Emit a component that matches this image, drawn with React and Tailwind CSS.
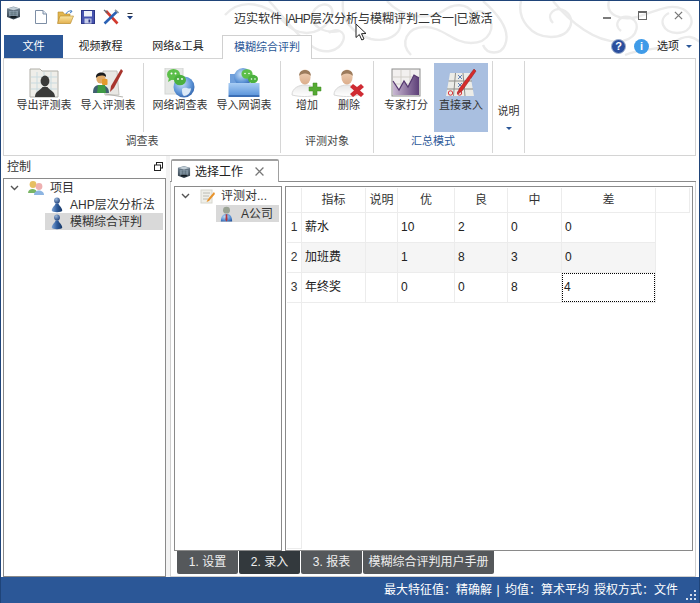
import React from 'react';

const CJK = "font-['Liberation_Sans','Noto_Sans_CJK_SC',sans-serif]";

function Gradients() {
    return (
        <svg className="absolute w-0 h-0">
            <defs>
                <linearGradient id="pinBody" x1="0" y1="0" x2="1" y2="0">
                    <stop offset="0" stopColor="#7ea3d4" />
                    <stop offset="0.5" stopColor="#2f5c9c" />
                    <stop offset="1" stopColor="#173765" />
                </linearGradient>
                <radialGradient id="pinHead" cx="0.35" cy="0.3" r="0.8">
                    <stop offset="0" stopColor="#9cb9dd" />
                    <stop offset="1" stopColor="#1f3f78" />
                </radialGradient>
                <linearGradient id="skin" x1="0" y1="0" x2="0" y2="1">
                    <stop offset="0" stopColor="#f0d2b8" />
                    <stop offset="1" stopColor="#dcae8c" />
                </linearGradient>
                <linearGradient id="shirt" x1="0" y1="0" x2="0" y2="1">
                    <stop offset="0" stopColor="#e8e8e8" />
                    <stop offset="1" stopColor="#ffffff" />
                </linearGradient>
                <linearGradient id="folderBlue" x1="0" y1="0" x2="0" y2="1">
                    <stop offset="0" stopColor="#a9cdf4" />
                    <stop offset="1" stopColor="#5f97dc" />
                </linearGradient>
                <radialGradient id="globe" cx="0.4" cy="0.35" r="0.75">
                    <stop offset="0" stopColor="#c6def6" />
                    <stop offset="0.6" stopColor="#5c93d6" />
                    <stop offset="1" stopColor="#2b5ba3" />
                </radialGradient>
                <linearGradient id="purple" x1="0" y1="0" x2="1" y2="0">
                    <stop offset="0" stopColor="#c9b8d2" />
                    <stop offset="1" stopColor="#5d3f78" />
                </linearGradient>
                <linearGradient id="folderYellow" x1="0" y1="0" x2="0" y2="1">
                    <stop offset="0" stopColor="#fbe7a3" />
                    <stop offset="1" stopColor="#e3b04e" />
                </linearGradient>
                <linearGradient id="cube" x1="0" y1="0" x2="0" y2="1">
                    <stop offset="0" stopColor="#7d8f9e" />
                    <stop offset="1" stopColor="#2d3a45" />
                </linearGradient>
            </defs>
        </svg>
    );
}

function Person({ className = '' }) {
    return (
        <svg viewBox="0 0 12 17" className={className}>
            <circle cx="6" cy="3.6" r="3.1" fill="url(#pinHead)" />
            <path d="M4.6 6.6 H7.4 C7.8 9 11.6 11 11.6 14.4 C11.6 16.8 0.4 16.8 0.4 14.4 C0.4 11 4.2 9 4.6 6.6 Z" fill="url(#pinBody)" />
        </svg>
    );
}

function CompanyPerson({ className = '' }) {
    return (
        <svg viewBox="0 0 13 17" className={className}>
            <circle cx="6.5" cy="4.4" r="3.7" fill="#9aa394" />
            <path d="M0.5 16.5 C0.5 10.5 3.5 8.6 6.5 8.6 C9.5 8.6 12.5 10.5 12.5 16.5 Z" fill="url(#globe)" />
            <path d="M5.7 8.8 H7.3 L7.6 15 L6.5 16.4 L5.4 15 Z" fill="#b5343a" />
        </svg>
    );
}

function AppIcon({ className = '' }) {
    return (
        <svg viewBox="0 0 15 14" className={className}>
            <path d="M1 2.5 L7.5 0.5 L14 2.5 V11 L7.5 13.5 L1 11 Z" fill="url(#cube)" />
            <path d="M1.5 2.6 L7.5 1 L13.5 2.6 L7.5 4.2 Z" fill="#c2ced6" />
            <rect x="3" y="5.2" width="9" height="4.6" fill="#92a5b3" />
            <path d="M3.5 6.8 H11.5 M3.5 8.3 H11.5 M6 5.4 V9.6 M9 5.4 V9.6" stroke="#53646f" strokeWidth="0.6" />
            <rect x="4.5" y="10" width="6" height="1.8" fill="#10181e" />
        </svg>
    );
}

function Chevron() {
    return (
        <svg viewBox="0 0 9 6" className="w-[9px] h-[6px] shrink-0">
            <path d="M1 1 L4.5 4.5 L8 1" stroke="#555" strokeWidth="1.4" fill="none" />
        </svg>
    );
}

function Watermark() {
    return (
        <svg viewBox="0 0 480 58" className="absolute left-[220px] top-0 w-[480px] h-[58px]" fill="none" stroke="#ebebeb" strokeWidth="2.4">
            <path d="M4 14 C20 -4 46 2 62 20 C76 36 96 36 108 20 C118 6 104 -2 94 8 C84 20 100 34 118 30" />
            <path d="M48 0 C62 14 70 30 92 46 C104 54 118 50 122 40 C126 30 114 26 108 32" />
            <path d="M122 0 C120 18 130 32 150 38 C170 42 184 30 178 18 C174 8 160 10 160 20" />
            <path d="M166 0 C180 16 206 20 222 10 C232 2 246 2 252 12" />
            <path d="M190 54 C178 42 186 26 204 26 C222 26 232 42 250 42 C268 42 276 26 266 14 C258 6 246 12 250 22" />
            <path d="M262 0 C278 14 290 30 284 44 C280 54 266 54 262 44" />
            <path d="M300 0 C296 18 310 36 330 36 C350 36 356 18 344 10 C334 4 324 14 332 22" />
            <path d="M332 0 C348 20 376 44 402 40 C418 36 420 20 408 16 C398 14 392 24 400 30" />
            <path d="M388 0 C384 14 400 20 416 16 C436 10 448 2 462 8 C476 16 472 32 456 32 C442 32 436 18 448 12" />
            <path d="M404 54 C424 46 440 50 452 42 C466 32 474 36 480 42" />
        </svg>
    );
}

function RibbonButton({ label, icon, active, width = 'w-[64px]' }) {
    return (
        <div className={`${width} h-[69px] flex flex-col items-center pt-[5px] shrink-0 ${active ? 'bg-[#a9bfe0]' : ''}`}>
            <div className="h-[29px] flex items-center justify-center">{icon}</div>
            <span className="text-[11px] leading-[16px] text-[#333] whitespace-nowrap">{label}</span>
        </div>
    );
}

function RibbonGroup({ title, titleColor = 'text-[#444]', width, pad, children }) {
    return (
        <div className={`${width} h-[92px] pt-[2px] shrink-0 border-r border-[#d6d6d6]`}>
            <div className={`flex h-[69px] ${pad}`}>{children}</div>
            <div className={`text-center text-[11px] leading-[18px] ${titleColor}`}>{title}</div>
        </div>
    );
}

const icons = {
    exportSheet: (
        <svg viewBox="0 0 30 30" className="w-[30px] h-[30px]">
            <path d="M1 1 H11 L13 3 H29 V29 H1 Z" fill="#efeee9" stroke="#b0afa8" />
            <path d="M2 9 H28 M2 15 H28 M2 21 H28 M8 4 V28 M15 4 V28 M22 4 V28" stroke="#c9dbe0" fill="none" />
            <ellipse cx="16" cy="13" rx="4.4" ry="5.4" fill="#3b3b39" />
            <path d="M6 29 C6 23 12 22 13.5 19 H18.5 C20 22 26 23 26 29 Z" fill="#3b3b39" />
        </svg>
    ),
    importSheet: (
        <svg viewBox="0 0 32 30" className="w-[32px] h-[30px]">
            <path d="M11 3 H25 L27 27 L13 27 Z" fill="#e9e8e4" stroke="#c4c4bf" />
            <path d="M14 26 L31 29" stroke="#b5b5b0" strokeWidth="1.2" />
            <path d="M29 1 L31 3 L22 20 L18 24 L19 18 Z" fill="#a8352d" />
            <circle cx="9" cy="11" r="4.6" fill="#e0aa68" />
            <path d="M4 10 C3 3 15 3 14 9 C11 7 7 7 4 10 Z" fill="#1c1c1c" />
            <path d="M1 25 C1 18 4 17 8 17 C12 17 17 18 17 25 Z" fill="#3f5f70" />
            <path d="M6 17 H13 L14 25 H5 Z" fill="#3f9a45" />
            <rect x="10" y="11" width="5.5" height="6" rx="1" fill="#e39a2c" />
        </svg>
    ),
    netSurvey: (
        <svg viewBox="0 0 32 30" className="w-[32px] h-[30px]">
            <rect x="1" y="0" width="18" height="26" fill="#e6e8e6" stroke="#d4d6d4" />
            <circle cx="20" cy="19" r="10.5" fill="url(#globe)" />
            <path d="M18 21 C22 18 25 22 27 20 C27 25 23 28 20 28 C18 27 18 24 18 21 Z" fill="#dbe9f7" />
            <ellipse cx="9.5" cy="6.5" rx="6.5" ry="5.6" fill="#5cbf49" />
            <path d="M5 10 L4 14 L9 11 Z" fill="#5cbf49" />
            <ellipse cx="16" cy="12" rx="6" ry="5.2" fill="#4bb03e" />
            <circle cx="7.5" cy="5.5" r="1" fill="#fff" />
            <circle cx="11.5" cy="5.5" r="1" fill="#fff" />
            <circle cx="14" cy="11" r="0.9" fill="#fff" />
            <circle cx="18" cy="11" r="0.9" fill="#fff" />
        </svg>
    ),
    importNet: (
        <svg viewBox="0 0 32 30" className="w-[32px] h-[30px]">
            <path d="M2 6 H9 V16 H2 Z" fill="#6f9fdb" />
            <circle cx="15" cy="9" r="9" fill="url(#globe)" />
            <ellipse cx="19" cy="6" rx="5.6" ry="4.8" fill="#5cbf49" />
            <ellipse cx="25" cy="11" rx="5" ry="4.2" fill="#4bb03e" />
            <circle cx="17" cy="5.5" r="0.8" fill="#fff" />
            <circle cx="21" cy="5.5" r="0.8" fill="#fff" />
            <circle cx="23.5" cy="11" r="0.8" fill="#fff" />
            <circle cx="27" cy="11" r="0.8" fill="#fff" />
            <path d="M0.5 15 H31.5 V27 H0.5 Z" fill="url(#folderBlue)" />
            <path d="M0.5 27 H31.5 V29 H0.5 Z" fill="#3c6fb6" />
        </svg>
    ),
    addPerson: (
        <svg viewBox="0 0 32 30" className="w-[32px] h-[30px]">
            <path d="M1 27 C1 20 8 17 14 17 C20 17 26 20 26 27 C18 29 9 29 1 27 Z" fill="url(#shirt)" stroke="#d8d8d8" />
            <ellipse cx="14" cy="9" rx="5.6" ry="7.4" fill="url(#skin)" />
            <path d="M8.2 8 C7.4 0 20.6 0 19.8 8 C18 4.5 10 4.5 8.2 8 Z" fill="#9c7b5c" />
            <path d="M22 15 H26 V19 H30 V23 H26 V27 H22 V23 H18 V19 H22 Z" fill="#55aa34" stroke="#3c8a20" strokeWidth="0.5" />
        </svg>
    ),
    delPerson: (
        <svg viewBox="0 0 32 30" className="w-[32px] h-[30px]">
            <path d="M1 27 C1 20 8 17 14 17 C20 17 26 20 26 27 C18 29 9 29 1 27 Z" fill="url(#shirt)" stroke="#d8d8d8" />
            <ellipse cx="14" cy="9" rx="5.6" ry="7.4" fill="url(#skin)" />
            <path d="M8.2 8 C7.4 0 20.6 0 19.8 8 C18 4.5 10 4.5 8.2 8 Z" fill="#9c7b5c" />
            <path d="M20 16 L24 19 L28 16 L31 19 L27 22.5 L31 26 L28 29 L24 26 L20 29 L17 26 L21 22.5 L17 19 Z" fill="#cf2b33" />
        </svg>
    ),
    expert: (
        <svg viewBox="0 0 30 30" className="w-[30px] h-[30px]">
            <rect x="1" y="1" width="28" height="27" fill="#f2f0ef" stroke="#8d8d8d" />
            <path d="M2 9 H28 M2 16 H28 M2 22 H28 M10 2 V27 M19 2 V27" stroke="#d2cfc9" />
            <path d="M2 13 L8 22 L13 13 L17 19 L23 7 L28 10 L28 27 L2 27 Z" fill="url(#purple)" />
            <path d="M2 13 L8 22 L13 13 L17 19 L23 7 L28 10" stroke="#54366f" strokeWidth="1.2" fill="none" />
        </svg>
    ),
    direct: (
        <svg viewBox="0 0 32 30" className="w-[32px] h-[30px]">
            <path d="M5 5 H25 L29 28 H1 Z" fill="#ecece7" />
            <path d="M3.5 13 H27 M2 21 H28 M10.5 5 L8.5 28 M18 5 L20 28" stroke="#8f8f8a" />
            <path d="M13 7 L17 11 M17 7 L13 11 M13 15 L17 19 M17 15 L13 19" stroke="#5d7fb5" />
            <circle cx="5.5" cy="25" r="2.2" fill="none" stroke="#d9363e" />
            <circle cx="14.5" cy="25" r="2.2" fill="none" stroke="#d9363e" />
            <path d="M29 1 L31 3 L17 23 L13 26 L14 21 Z" fill="#d62b2b" stroke="#8a1a1a" strokeWidth="0.5" />
        </svg>
    ),
};

function HeaderCell({ width, children }) {
    return (
        <div className={`${width} h-[25px] shrink-0 border-r border-b border-[#ececec] text-center text-[12px] leading-[25px] text-[#333]`}>
            {children}
        </div>
    );
}

function DataRow({ n, name, values, shaded, focus }) {
    const widths = ['w-[57px]', 'w-[53px]', 'w-[54px]'];
    const cell = 'shrink-0 border-r border-b border-[#ececec] pl-[3px] text-[12px] leading-[29px] text-[#222]';
    return (
        <div className="flex h-[30px] shrink-0">
            <div className="w-[15px] shrink-0 border-r border-b border-[#ececec] text-center text-[12px] leading-[29px] text-[#333]">{n}</div>
            <div className={`flex ${shaded ? 'bg-[#f5f5f5]' : ''}`}>
                <div className={`w-[64px] ${cell}`}>{name}</div>
                <div className={`w-[32px] ${cell}`} />
                {values.slice(0, 3).map((v, i) => (
                    <div key={i} className={`${widths[i]} ${cell}`}>{v}</div>
                ))}
                <div className="w-[94px] shrink-0 border-r border-b border-[#ececec] text-[12px] text-[#222]">
                    <div className={`h-[29px] pl-[1px] leading-[27px] border ${focus ? 'border-dotted border-black' : 'border-transparent pl-[2px]'}`}>{values[3]}</div>
                </div>
            </div>
        </div>
    );
}

export default function App() {
    const tabs = [
        { label: '1. 设置', className: 'w-[61px] bg-[#55585b]' },
        { label: '2. 录入', className: 'w-[61px] bg-[#33393d]' },
        { label: '3. 报表', className: 'w-[61px] bg-[#55585b]' },
        { label: '模糊综合评判用户手册', className: 'w-[131px] bg-[#55585b]' },
    ];

    return (
        <div className={`w-[700px] h-[603px] flex flex-col overflow-hidden bg-white border-x border-t border-[#1f4479] relative ${CJK}`}>
            <Gradients />
            <Watermark />

            {/* Title bar */}
            <div className="h-[34px] flex items-center shrink-0 relative">
                <AppIcon className="ml-[5px] w-[15px] h-[14px] -mt-[11px]" />
                <div className="flex items-center ml-[14px] gap-[10px] -mt-[3px]">
                    <svg viewBox="0 0 12 14" className="w-[12px] h-[14px]">
                        <path d="M0.5 0.5 H8 L11.5 4 V13.5 H0.5 Z" fill="#fff" stroke="#7d8ea5" />
                        <path d="M8 0.5 V4 H11.5" fill="#dfe7f2" stroke="#7d8ea5" />
                    </svg>
                    <svg viewBox="0 0 17 14" className="w-[17px] h-[14px]">
                        <path d="M1 2 H6 L7 4 H13 V13 H1 Z" fill="#e2b64e" stroke="#b58a2c" strokeWidth="0.6" />
                        <path d="M3 6 H16.5 L13.5 13.5 H0.5 Z" fill="url(#folderYellow)" stroke="#b58a2c" strokeWidth="0.6" />
                        <path d="M9 4 C10.5 1 13 0.5 15 1.5 M15 1.5 L13.5 0 M15 1.5 L13 3" stroke="#3f7cc4" fill="none" />
                    </svg>
                    <svg viewBox="0 0 14 14" className="w-[14px] h-[14px] -ml-[3px]">
                        <rect x="0.5" y="0.5" width="13" height="13" fill="#4754b0" stroke="#2d3786" />
                        <rect x="3" y="1" width="8" height="5.5" fill="#eef1f8" />
                        <rect x="3.5" y="8.5" width="7" height="5" fill="#c7cde8" />
                        <rect x="7.5" y="9.5" width="1.8" height="3" fill="#2d3786" />
                    </svg>
                    <svg viewBox="0 0 16 16" className="w-[16px] h-[16px] -ml-[2px]">
                        <path d="M3 2 L14.5 14.5" stroke="#d23a2e" strokeWidth="2.6" />
                        <path d="M14 2.5 L1.5 14.5" stroke="#2b62b5" strokeWidth="2.6" />
                        <path d="M12 0.8 L15.5 4" stroke="#8b949e" strokeWidth="1.6" />
                        <path d="M1 1 L4.5 4" stroke="#5d6670" strokeWidth="1.4" />
                    </svg>
                    <svg viewBox="0 0 6 7" className="w-[6px] h-[7px] -ml-[2px]">
                        <path d="M0.5 0.5 H5.5" stroke="#333" />
                        <path d="M0 3 H6 L3 6.5 Z" fill="#1f3f7f" />
                    </svg>
                </div>
                <div className="absolute left-[233px] top-[9px] text-[12px] leading-[18px] text-[#333] whitespace-nowrap">
                    迈实软件 <span className="tracking-[-0.8px]">|AHP</span>层次分析与模糊评判二合一<span className="tracking-[-0.5px]">|</span>已激活
                </div>
                {/* cursor */}
                <svg viewBox="0 0 12 18" className="absolute left-[354px] top-[22px] w-[12px] h-[18px]">
                    <path d="M1 1 V14.5 L4.3 11.5 L6.8 17 L9 16 L6.5 10.7 L11 10.5 Z" fill="#fff" stroke="#222" />
                </svg>
                {/* window buttons */}
                <div className="absolute right-[16px] top-[10px] flex items-start gap-[27px]">
                    <div className="w-[8px] h-[2px] bg-[#7b7b7b] mt-[6px]" />
                    <div className="w-[9px] h-[9px] border border-[#666] border-t-2" />
                    <svg viewBox="0 0 10 10" className="w-[9px] h-[9px]">
                        <path d="M1 1 L9 9 M9 1 L1 9" stroke="#777" strokeWidth="1.4" />
                    </svg>
                </div>
            </div>

            {/* Tabs */}
            <div className="h-[23px] flex shrink-0 items-end pl-[3px] relative z-10">
                <div className="w-[59px] h-[23px] bg-[#2b5797] text-white text-center text-[11px] leading-[23px]">文件</div>
                <div className="w-[75px] h-[23px] text-center text-[11px] leading-[23px] text-[#222]">视频教程</div>
                <div className="w-[84px] h-[23px] pr-[4px] text-center text-[11px] leading-[23px] text-[#222]">网络&amp;工具</div>
                <div className="w-[90px] h-[24px] border-x border-t border-[#d0d0d0] bg-white -mb-[1px] text-center text-[11px] leading-[23px] text-[#2b5797]">模糊综合评判</div>
                <div className="ml-auto flex items-center h-[23px] pr-[7px]">
                    <div className="w-[15px] h-[15px] rounded-full bg-[#2b4f9e] border border-[#9fb0cc] text-white text-[11px] font-bold leading-[13px] text-center">?</div>
                    <div className="ml-[8px] w-[15px] h-[15px] rounded-full bg-[#3f9be8] text-white text-[11px] font-bold leading-[15px] text-center">i</div>
                    <span className="ml-[8px] text-[11px] text-[#222]">选项</span>
                    <span className="ml-[7px] w-0 h-0 border-x-[3px] border-x-transparent border-t-[3px] border-t-[#2b5797]" />
                </div>
            </div>

            {/* Ribbon */}
            <div className="ml-[2px] mr-[3px] h-[98px] shrink-0 border border-[#d4d4d4] flex pt-[2px] bg-white relative">
                <RibbonGroup title="调查表" width="w-[277px]" pad="pl-[8px]">
                    <RibbonButton label="导出评测表" icon={icons.exportSheet} />
                    <RibbonButton label="导入评测表" icon={icons.importSheet} />
                    <div className="ml-[3px] mr-[4px] w-px h-[69px] bg-[#d6d6d6] shrink-0" />
                    <RibbonButton label="网络调查表" icon={icons.netSurvey} />
                    <RibbonButton label="导入网调表" icon={icons.importNet} />
                </RibbonGroup>
                <RibbonGroup title="评测对象" width="w-[93px]" pad="pl-[5px]">
                    <RibbonButton label="增加" icon={icons.addPerson} width="w-[42px]" />
                    <RibbonButton label="删除" icon={icons.delPerson} width="w-[42px]" />
                </RibbonGroup>
                <RibbonGroup title="汇总模式" titleColor="text-[#2b5797]" width="w-[119px]" pad="pl-[4px]">
                    <RibbonButton label="专家打分" icon={icons.expert} width="w-[56px]" />
                    <RibbonButton label="直接录入" icon={icons.direct} active width="w-[54px]" />
                </RibbonGroup>
                <div className="flex flex-col items-center w-[32px] h-[92px] shrink-0 border-r border-[#d6d6d6] pt-[43px]">
                    <span className="text-[11px] leading-[14px] text-[#333]">说明</span>
                    <span className="mt-[9px] w-0 h-0 border-x-[3px] border-x-transparent border-t-[3px] border-t-[#2b5797]" />
                </div>
            </div>

            {/* Work area */}
            <div className="flex-1 flex min-h-0 bg-white">
                <div className="w-[165px] shrink-0 pt-[2px] pl-[2px] flex flex-col">
                    <div className="h-[17px] mb-[3px] flex items-center justify-between pl-[4px] pr-[3px] text-[12px] text-[#333]">
                        <span>控制</span>
                        <svg viewBox="0 0 9 9" className="w-[9px] h-[9px]">
                            <rect x="2.5" y="0.5" width="6" height="5.5" fill="#fff" stroke="#222" />
                            <rect x="0.5" y="3" width="6" height="5.5" fill="#fff" stroke="#222" />
                        </svg>
                    </div>
                    <div className="flex-1 border border-[#8a8a8a] bg-white">
                        <div className="flex items-center h-[17px] pl-[6px]">
                            <Chevron />
                            <svg viewBox="0 0 16 14" className="ml-[9px] w-[16px] h-[14px]">
                                <circle cx="5" cy="3.5" r="3.4" fill="#e6bf62" />
                                <circle cx="11" cy="5.5" r="3.4" fill="#eeb0b0" />
                                <path d="M0 12 C0 6.5 9 6.5 9 12 Z" fill="#79b565" />
                                <path d="M6 14 C6 8 16 8 16 14 Z" fill="#8db5e2" />
                            </svg>
                            <span className="ml-[6px] text-[12px] text-[#333]">项目</span>
                        </div>
                        <div className="flex items-center h-[17px] pl-[47px]">
                            <Person className="w-[12px] h-[16px]" />
                            <span className="ml-[7px] text-[12px] text-[#333] whitespace-nowrap">AHP层次分析法</span>
                        </div>
                        <div className="flex items-center h-[17px] ml-[41px] pl-[6px] bg-[#d9d9d9] w-[118px]">
                            <Person className="w-[12px] h-[16px]" />
                            <span className="ml-[7px] text-[12px] text-[#333] whitespace-nowrap">模糊综合评判</span>
                        </div>
                    </div>
                </div>

                <div className="w-[4px] shrink-0 bg-[#f3f3f3]" />

                <div className="flex-1 flex flex-col min-w-0 bg-white mr-[3px]">
                    <div className="h-[26px] flex items-end shrink-0 border-b border-[#8a8a8a] pl-[1px]">
                        <div className="w-[108px] h-[23px] border-x border-t-2 border-[#a0a0a0] rounded-t-[2px] flex items-center pl-[5px] -mb-[1px] bg-white">
                            <AppIcon className="w-[14px] h-[14px]" />
                            <span className="ml-[4px] text-[12px] text-[#222]">选择工作</span>
                            <svg viewBox="0 0 8 8" className="ml-[12px] w-[9px] h-[9px]">
                                <path d="M0.5 0.5 L7.5 7.5 M7.5 0.5 L0.5 7.5" stroke="#777" strokeWidth="1.1" />
                            </svg>
                        </div>
                    </div>
                    <div className="flex-1 flex flex-col min-h-0 border-x border-b border-[#d0d0d0]">
                        <div className="flex pt-[4px] pl-[3px] pr-[2px] shrink-0">
                            <div className="w-[108px] h-[365px] shrink-0 border border-[#8a8a8a]">
                                <div className="flex items-center h-[18px] pl-[6px]">
                                    <Chevron />
                                    <svg viewBox="0 0 15 15" className="ml-[10px] w-[15px] h-[15px] shrink-0">
                                        <rect x="1" y="1" width="11" height="13" fill="#efefe9" stroke="#d6d6ce" />
                                        <path d="M3 4 H10 M3 7 H9 M3 10 H8" stroke="#bcbcb4" />
                                        <path d="M14 3 L8 10 L6.5 13 L9 12 L15 5 Z" fill="#e8932b" />
                                    </svg>
                                    <span className="ml-[6px] text-[12px] text-[#333] whitespace-nowrap">评测对...</span>
                                </div>
                                <div className="flex items-center h-[17px] ml-[41px] pl-[4px] bg-[#d9d9d9] w-[63px]">
                                    <CompanyPerson className="w-[13px] h-[16px] shrink-0" />
                                    <span className="ml-[8px] text-[12px] text-[#333] whitespace-nowrap">A公司</span>
                                </div>
                            </div>
                            <div className="ml-[3px] flex-1 h-[365px] border border-[#8a8a8a] min-w-0 flex flex-col pt-[1px] pl-[1px] pr-[2px] pb-[1px]">
                                <div className="flex shrink-0">
                                    <div className="w-[15px] h-[25px] shrink-0 border-r border-b border-[#ececec]" />
                                    <HeaderCell width="w-[64px]">指标</HeaderCell>
                                    <HeaderCell width="w-[32px]">说明</HeaderCell>
                                    <HeaderCell width="w-[57px]">优</HeaderCell>
                                    <HeaderCell width="w-[53px]">良</HeaderCell>
                                    <HeaderCell width="w-[54px]">中</HeaderCell>
                                    <HeaderCell width="w-[94px]">差</HeaderCell>
                                    <div className="flex-1 h-[25px] border-b border-r border-[#ececec]" />
                                </div>
                                <DataRow n="1" name="薪水" values={['10', '2', '0', '0']} />
                                <DataRow n="2" name="加班费" values={['1', '8', '3', '0']} shaded />
                                <DataRow n="3" name="年终奖" values={['0', '0', '8', '4']} focus />
                                <div className="w-[15px] flex-1 border-r border-b border-[#ececec]" />
                            </div>
                        </div>
                        <div className="flex shrink-0 pl-[6px] gap-[1px]">
                            {tabs.map((t) => (
                                <div key={t.label} className={`h-[23px] text-center text-[12px] leading-[22px] text-[#eee] rounded-b-[2px] whitespace-nowrap ${t.className}`}>{t.label}</div>
                            ))}
                        </div>
                    </div>
                </div>
            </div>

            {/* Status bar */}
            <div className="h-[26px] shrink-0 bg-[#2b5797] flex items-center justify-end pr-[21px] text-[12px] text-white relative">
                <span>最大特征值：精确解</span>
                <span className="ml-[3px] mr-[4px] w-[6px] text-center">|</span>
                <span>均值：算术平均</span>
                <span className="ml-[5px]">授权方式：文件</span>
                <svg viewBox="0 0 11 11" className="absolute right-[2px] bottom-[2px] w-[11px] h-[11px]" fill="#d5deec">
                    <rect x="8" y="0" width="2" height="2" />
                    <rect x="4" y="4" width="2" height="2" />
                    <rect x="8" y="4" width="2" height="2" />
                    <rect x="0" y="8" width="2" height="2" />
                    <rect x="4" y="8" width="2" height="2" />
                    <rect x="8" y="8" width="2" height="2" />
                </svg>
            </div>
        </div>
    );
}
